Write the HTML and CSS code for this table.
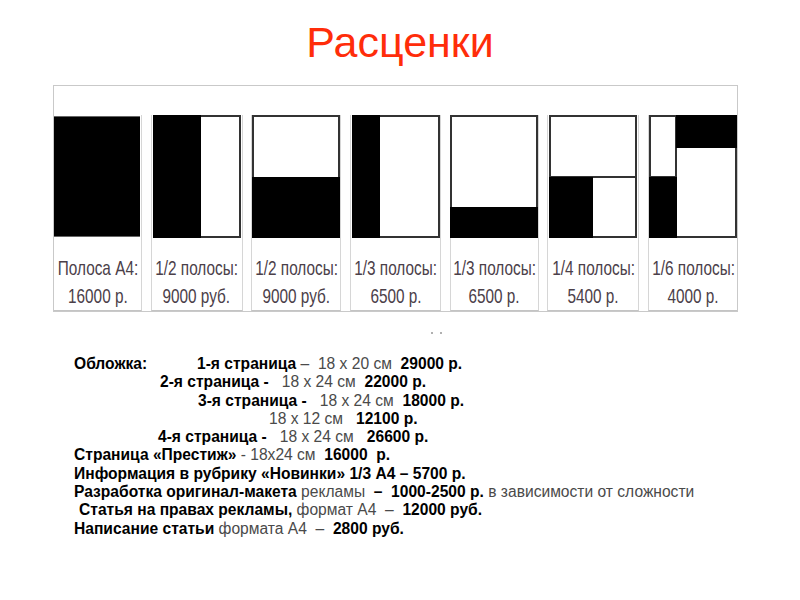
FILE: index.html
```html
<!DOCTYPE html>
<html lang="ru">
<head>
<meta charset="utf-8">
<title>Расценки</title>
<link rel="stylesheet" href="styles.css">
</head>
<body>
<h1 class="title">Расценки</h1>
<div class="frame">
  <div class="spacer"></div>
  <div class="cols">
    <div class="col">
      <svg class="box" viewBox="0 0 88 123" width="88" height="123"><rect x="0" y="0" width="88" height="123" fill="#000"/></svg>
      <div class="label"><span class="nar">Полоса А4:</span><span class="nar">16000 р.</span></div>
    </div>
    <div class="col">
      <svg class="box" viewBox="0 0 88 123" width="88" height="123"><rect x="1" y="1" width="86" height="121" fill="#fff" stroke="#333" stroke-width="2"/><rect x="0" y="0" width="48" height="123" fill="#000"/></svg>
      <div class="label"><span class="nar">1/2 полосы:</span><span class="nar">9000 руб.</span></div>
    </div>
    <div class="col">
      <svg class="box" viewBox="0 0 88 123" width="88" height="123"><rect x="1" y="1" width="86" height="121" fill="#fff" stroke="#333" stroke-width="2"/><rect x="0" y="62" width="88" height="61" fill="#000"/></svg>
      <div class="label"><span class="nar">1/2 полосы:</span><span class="nar">9000 руб.</span></div>
    </div>
    <div class="col">
      <svg class="box" viewBox="0 0 88 123" width="88" height="123"><rect x="1" y="1" width="86" height="121" fill="#fff" stroke="#333" stroke-width="2"/><rect x="0" y="0" width="28" height="123" fill="#000"/></svg>
      <div class="label"><span class="nar">1/3 полосы:</span><span class="nar">6500 р.</span></div>
    </div>
    <div class="col">
      <svg class="box" viewBox="0 0 88 123" width="88" height="123"><rect x="1" y="1" width="86" height="121" fill="#fff" stroke="#333" stroke-width="2"/><rect x="0" y="92" width="88" height="31" fill="#000"/></svg>
      <div class="label"><span class="nar">1/3 полосы:</span><span class="nar">6500 р.</span></div>
    </div>
    <div class="col">
      <svg class="box" viewBox="0 0 88 123" width="88" height="123"><rect x="1" y="1" width="86" height="121" fill="#fff" stroke="#333" stroke-width="2"/><line x1="0" y1="62" x2="88" y2="62" stroke="#333" stroke-width="2"/><rect x="0" y="62" width="44" height="61" fill="#000"/></svg>
      <div class="label"><span class="nar">1/4 полосы:</span><span class="nar">5400 р.</span></div>
    </div>
    <div class="col">
      <svg class="box" viewBox="0 0 88 123" width="88" height="123"><rect x="1" y="1" width="86" height="121" fill="#fff" stroke="#333" stroke-width="2"/><line x1="27" y1="0" x2="27" y2="123" stroke="#333" stroke-width="2"/><line x1="0" y1="62" x2="27" y2="62" stroke="#333" stroke-width="2"/><rect x="27" y="0" width="61" height="33" fill="#000"/><rect x="0" y="62" width="28" height="61" fill="#000"/></svg>
      <div class="label"><span class="nar">1/6 полосы:</span><span class="nar">4000 р.</span></div>
    </div>
  </div>
</div>
<div class="dots"><span class="dot"></span><span class="dot"></span></div>
<div class="text">
  <div class="line l0"><b class="lead">Обложка:</b><b>1-я страница</b><span class="g"> –  18 х 20 см  </span><b>29000 р.</b></div>
  <div class="line l2"><b>2-я страница - </b><span class="g">  18 х 24 см  </span><b>22000 р.</b></div>
  <div class="line l3"><b>3-я страница - </b><span class="g">  18 х 24 см  </span><b>18000 р.</b></div>
  <div class="line l4"><span class="g">18 х 12 см   </span><b>12100 р.</b></div>
  <div class="line l5"><b>4-я страница - </b><span class="g">  18 х 24 см   </span><b>26600 р.</b></div>
  <div class="line l0"><b>Страница «Престиж»</b><span class="g"> - 18х24 см  </span><b>16000  р.</b></div>
  <div class="line l0"><b>Информация в рубрику «Новинки» 1/3 А4 – 5700 р.</b></div>
  <div class="line l0"><b>Разработка оригинал-макета</b><span class="g"> рекламы  </span><b>–  1000-2500 р.</b><span class="g"> в зависимости от сложности</span></div>
  <div class="line l9"><b>Статья на правах рекламы,</b><span class="g"> формат А4  –  </span><b>12000 руб.</b></div>
  <div class="line l0"><b>Написание статьи</b><span class="g"> формата А4  –  </span><b>2800 руб.</b></div>
</div>
</body>
</html>
```

FILE: styles.css
```css
html, body {
  margin: 0;
  padding: 0;
  background: #fff;
}
body {
  font-family: "Liberation Sans", Arial, sans-serif;
  color: #000;
  width: 800px;
  height: 600px;
  overflow: hidden;
}
.title {
  margin: 0;
  padding-top: 18px;
  font-size: 43px;
  line-height: 48px;
  font-weight: normal;
  color: #ff2d0a;
  text-align: center;
}
.frame {
  margin: 19px 0 0 53px;
  width: 683px;
  border: 1px solid #c9c9c9;
}
.spacer {
  height: 29px;
}
.cols {
  display: grid;
  grid-template-columns: 88px 92px 90px 91px 89px 92px 89px;
  column-gap: 8.7px;
}
.col {
  display: flex;
  flex-direction: column;
  align-items: center;
  min-width: 0;
  border-left: 1px solid #d6d6d6;
  border-right: 1px solid #d6d6d6;
  border-bottom: 1px solid #c4c4c4;
}
.col:first-child {
  border-left: none;
  align-items: flex-start;
}
.col:last-child {
  border-right: none;
}
.box {
  display: block;
  width: 88px;
  height: 123px;
  flex: none;
}
.col:first-child .box {
  width: 86px;
}
.label {
  height: 56px;
  padding-top: 16px;
  display: flex;
  flex-direction: column;
  align-items: center;
  width: 100%;
}
.nar {
  display: block;
  font-size: 21px;
  line-height: 28px;
  color: #4b4049;
  white-space: nowrap;
  transform: scaleX(0.73);
}
.dots {
  display: flex;
  gap: 7px;
  padding-left: 431px;
  height: 2px;
  margin-top: 20px;
}
.dot {
  width: 2px;
  height: 2px;
  background: #b0b0b0;
}
.text {
  margin-top: 21px;
  font-size: 15.6px;
  line-height: 18.3px;
}
.line {
  white-space: pre;
}
.line b {
  font-weight: bold;
  color: #000;
}
.g {
  color: #4a4a4a;
}
.lead {
  display: inline-block;
  width: 123px;
}
.l0 { padding-left: 74px; }
.l2 { padding-left: 160px; }
.l3 { padding-left: 198px; }
.l4 { padding-left: 269px; }
.l5 { padding-left: 158px; }
.l9 { padding-left: 79px; }
```
